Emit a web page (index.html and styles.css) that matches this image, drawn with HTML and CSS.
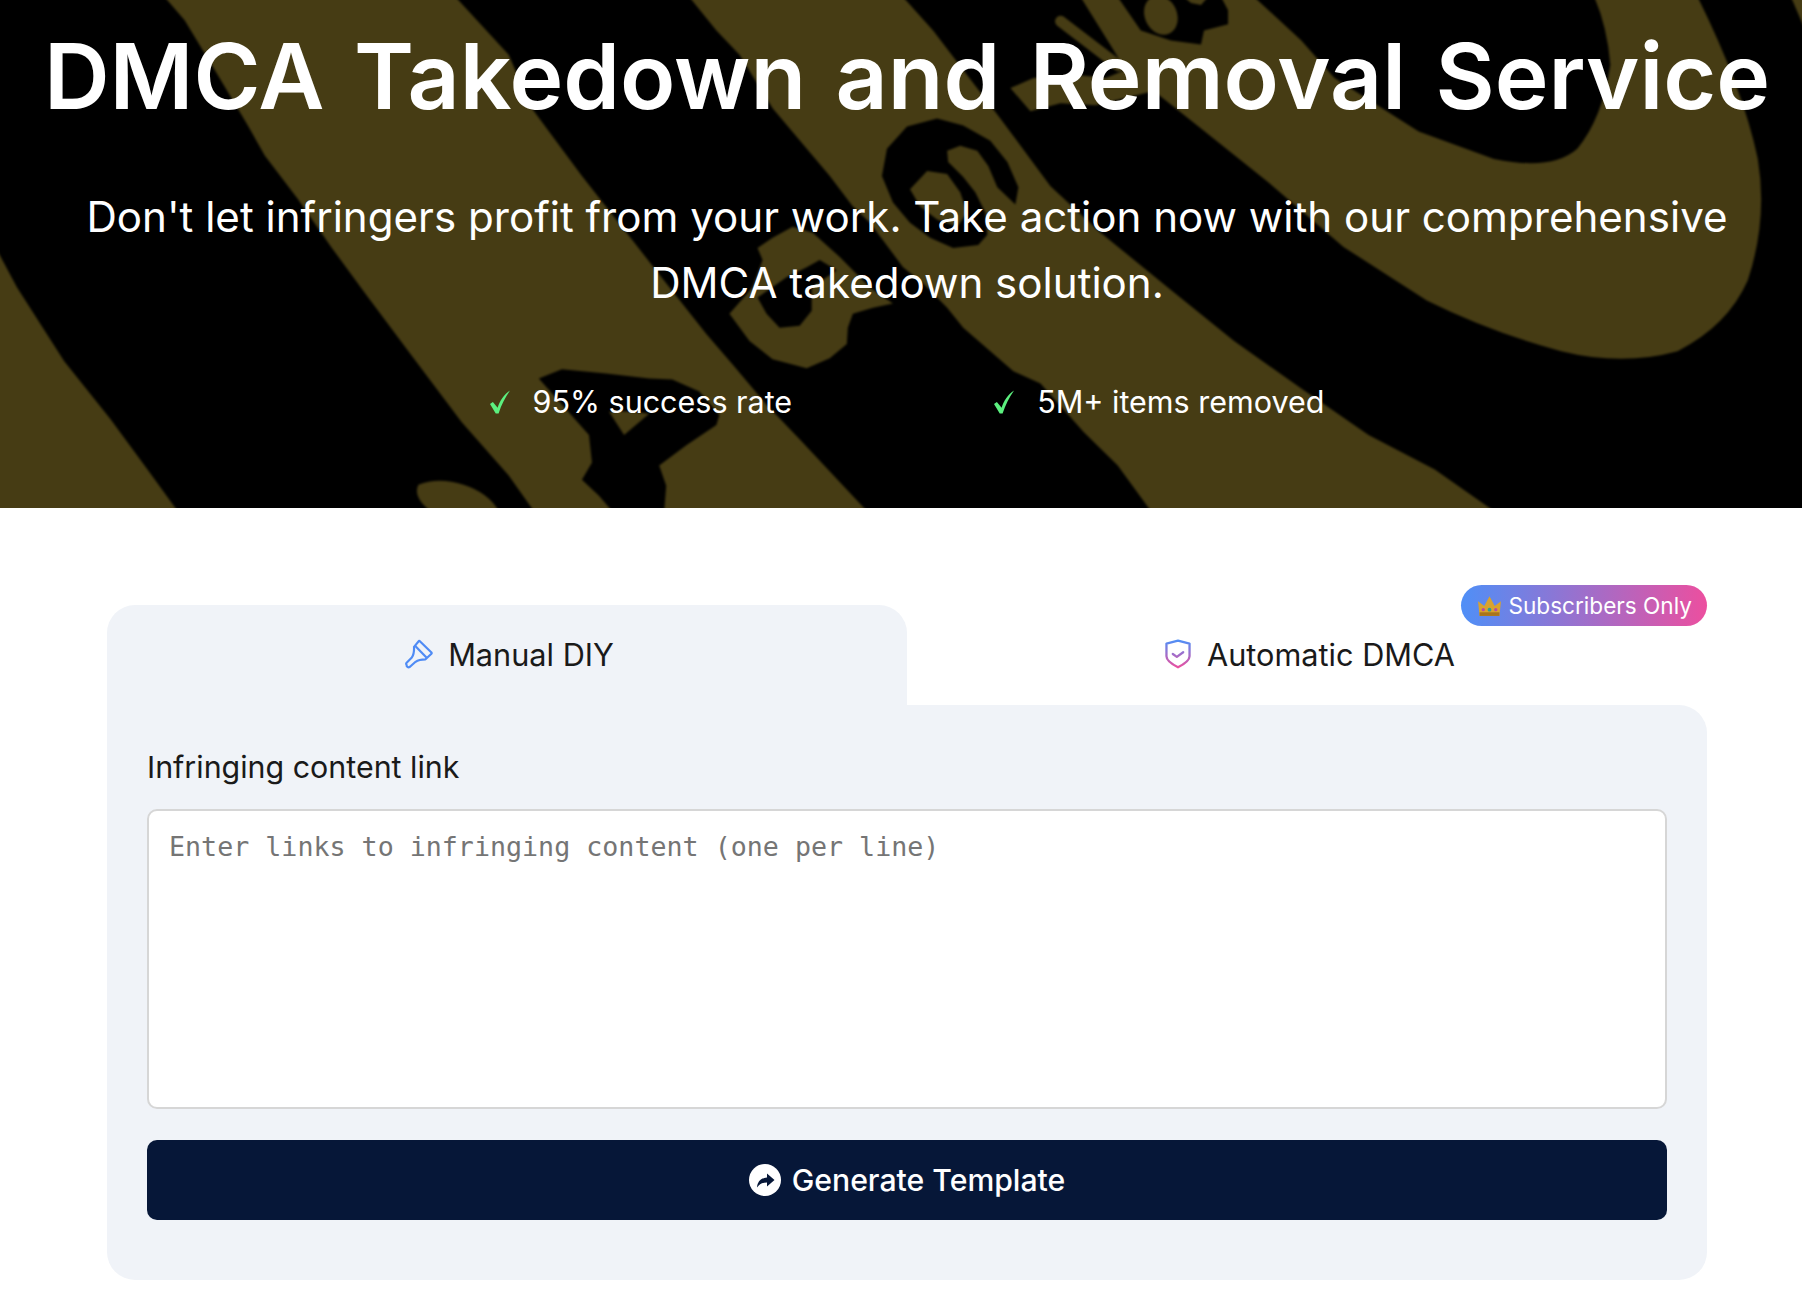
FILE: index.html
```html
<!DOCTYPE html>
<html lang="en">
<head>
    <meta charset="UTF-8">
    <meta name="viewport" content="width=device-width, initial-scale=1.0">
    <title>DMCA Takedown and Removal Service</title>
    <link rel="stylesheet" href="styles.css">
</head>
<body>
    <section class="hero">
        <!-- backdrop artwork -->
        <svg class="hero-art" viewBox="0 0 1802 508" preserveAspectRatio="none" aria-hidden="true">
            <g class="art-olive">
                <path d="M0 250L20 287 67 360 113 417 150 467 180 508H0Z"/>
                <path d="M167 0L187 23 220 77 250 127 267 157 300 200 333 247 367 293 410 350 463 420 510 473 535 508H867L800 437 767 403 733 363 707 333 667 283 633 240 583 177 533 110 510 57 457 0Z"/>
                <path d="M420 482Q440 474 465 482T500 508H432Q414 494 420 482Z"/>
                <path d="M690 0L717 33 740 57 773 110 830 177 853 207 870 223 903 267 923 283 947 307 963 327 1013 370 1040 382 1083 430 1117 463 1150 508H1492L1433 467 1367 433 1300 387 1233 340 1167 287 1100 233 1050 187 1000 120 933 33 903 0Z"/>
                <path d="M758 248L773 238 793 227 813 233 840 257 870 287 893 303 873 307 853 313 848 327 847 343 830 357 807 367 773 358 750 340 730 313 753 287 763 260Z"/>
                <path d="M1253 0L1300 43 1333 80 1417 133 1492 160Q1550 172 1575 150 1600 120 1608 67 1605 30 1592 0H1695Q1740 90 1755 160 1765 220 1745 280 1725 325 1675 350 1620 365 1559 350 1490 332 1425 300L1342 247 1267 183 1200 130 1153 93 1095 107 1060 105 1030 113 1010 90 1033 80 1077 77 1105 80 1125 72 1080 0Z"/>
                <path d="M1788 0H1802V32Z"/>
            </g>
            <path class="art-finger" d="M1060 24L1118 68"/>
            <g class="art-black">
                <path d="M540 377L563 368 607 372 650 377 673 378 700 390 720 413 717 423 687 443 660 463 667 483 665 508H613L600 493 583 477 593 460 590 433Z"/>
                <path d="M820 260L837 270 812 287 812 310 800 325 780 327 767 313 758 297 787 277 807 267Z"/>
                <path d="M937 120L963 127 990 142 1007 163 1018 188 1015 205 997 188 988 167 977 152 960 147 947 152 948 163 963 178 975 193 985 213 987 235 978 245 953 248 930 238 910 223 893 203 882 177 887 150 907 128Z"/>
                <path d="M1117 0L1140 33 1170 43 1200 47 1203 33 1227 27 1227 13 1220 0Z"/>
            </g>
            <g class="art-olive">
                <path d="M610 410Q630 408 650 412L625 433Z"/>
                <path d="M910 190L927 172 947 175 960 193 967 213 957 227 937 220 920 207Z"/>
                <ellipse cx="1160" cy="18" rx="16" ry="20" transform="rotate(-25 1160 18)"/>
                <path d="M1183 0H1207L1200 8 1190 6Z"/>
            </g>
        </svg>
        <h1>DMCA Takedown and Removal Service</h1>
        <p class="subtitle">Don't let infringers profit from your work. Take action now with our comprehensive<br>DMCA takedown solution.</p>
        <ul class="perks">
            <li>
                <svg class="tick" viewBox="0 0 22 24"><path d="M0 14L3 12 8 18C10 11 15 4 21 0 16 7 12 15 9 24H6Z"/></svg>
                95% success rate
            </li>
            <li>
                <svg class="tick" viewBox="0 0 22 24"><path d="M0 14L3 12 8 18C10 11 15 4 21 0 16 7 12 15 9 24H6Z"/></svg>
                5M+ items removed
            </li>
        </ul>
    </section>

    <main class="tool">
        <div class="tabs">
            <div class="tab active">
                <svg class="tab-icon" viewBox="0 0 90 90" fill="none" stroke="#4f8bf5" stroke-width="7" stroke-linejoin="round">
                    <path d="M47 3L85 40Q87 43 84 45L66 62Q45 62 34 70L16 86Q10 90 6 85L5 80Q2 76 6 72L22 56Q30 45 29 22L44 4Q46 2 47 3Z"/>
                    <path d="M33 19L69 56"/>
                </svg>
                Manual DIY
            </div>
            <div class="tab">
                <svg class="tab-icon" viewBox="0 0 24 26" fill="none" stroke="url(#shieldGrad)" stroke-width="2" stroke-linejoin="round" stroke-linecap="round">
                    <defs>
                        <linearGradient id="shieldGrad" gradientUnits="userSpaceOnUse" x1="12" y1="1" x2="12" y2="25">
                            <stop offset="0" stop-color="#4f8ff7"/>
                            <stop offset="1" stop-color="#ec4f9f"/>
                        </linearGradient>
                    </defs>
                    <path d="M2 4L12 1.5 22 4V15C22 19 16 22.5 12 24.5 8 22.5 2 19 2 15Z"/>
                    <path d="M7.5 13L11 15.5 16.5 11.5"/>
                </svg>
                Automatic DMCA
                <span class="badge">
                    <svg class="crown" viewBox="0 0 24 22">
                        <path d="M2.5 21L1 7 7 11.5 12 2 17 11.5 23 7 21.5 21Z" fill="#d9a32e"/>
                        <path d="M2.5 17.5H21.5V21H2.5Z" fill="#a8741c"/>
                        <circle cx="6" cy="15" r="1.6" fill="#b84aa0"/>
                        <circle cx="12" cy="15" r="1.8" fill="#2f9e8f"/>
                        <circle cx="18" cy="15" r="1.6" fill="#b84aa0"/>
                    </svg>
                    Subscribers Only
                </span>
            </div>
        </div>
        <div class="panel">
            <label for="links">Infringing content link</label>
            <textarea id="links" placeholder="Enter links to infringing content (one per line)"></textarea>
            <button type="button">
                <svg class="btn-icon" viewBox="0 0 32 32">
                    <circle cx="16" cy="16" r="16" fill="#fff"/>
                    <path d="M18 9.5L25.5 16 18 22.5V18.5C13.5 18.5 10.5 20 8 23.5 8.5 17.5 12 14 18 13.5Z" fill="#061738"/>
                </svg>
                Generate Template
            </button>
        </div>
    </main>
</body>
</html>
```
FILE: styles.css
```css
* {
    box-sizing: border-box;
}
body {
    margin: 0;
    font-family: Inter, "Liberation Sans", sans-serif;
    color: #1a1a1a;
    background: #fff;
}
.hero {
    position: relative;
    height: 508px;
    padding: 23px 0 0 12px;
    background: #000;
    color: #fff;
    text-align: center;
    overflow: hidden;
}
.hero-art {
    position: absolute;
    left: -3px;
    top: -3px;
    width: calc(100% + 6px);
    height: calc(100% + 6px);
    filter: blur(0.8px);
}
.art-olive {
    fill: #463c14;
}
.art-black {
    fill: #000;
}
.art-finger {
    fill: none;
    stroke: #463c14;
    stroke-width: 11;
    stroke-linecap: round;
}
.hero h1 {
    position: relative;
    margin: 0;
    font-size: 91px;
    font-weight: 600;
    line-height: 106px;
    word-spacing: 6.5px;
}
.subtitle {
    position: relative;
    margin: 55px 0 0;
    font-size: 42.1px;
    line-height: 66px;
}
.perks {
    position: relative;
    display: flex;
    justify-content: center;
    gap: 202px;
    margin: 66px 0 0;
    padding: 0;
    list-style: none;
    font-size: 30.5px;
    line-height: 40px;
}
.perks li {
    display: flex;
    align-items: center;
    gap: 22px;
}
.tick {
    width: 21px;
    height: 24px;
    fill: #5cf07f;
}
.tool {
    padding: 97px 95px 24px 107px;
}
.tabs {
    display: flex;
}
.tab {
    position: relative;
    flex: 1;
    display: flex;
    align-items: center;
    justify-content: center;
    gap: 15px;
    height: 100px;
    padding: 0 0 2px 5px;
    font-size: 30.7px;
    border-radius: 28px 28px 0 0;
}
.tab.active {
    background: #f0f3f8;
}
.tab-icon {
    width: 28px;
    height: 30px;
}
.badge {
    position: absolute;
    top: -20px;
    right: 0;
    display: flex;
    align-items: center;
    gap: 6px;
    height: 41px;
    padding: 0 15px 0 16px;
    border-radius: 21px;
    background: linear-gradient(90deg, #4f8ff7, #ec4f9f);
    color: #fff;
    font-size: 22.6px;
}
.crown {
    width: 25px;
    height: 23px;
}
.panel {
    padding: 40px;
    height: 575px;
    background: #f0f3f8;
    border-radius: 0 28px 28px 28px;
}
.panel label {
    display: block;
    font-size: 30.4px;
    line-height: 44px;
    margin-bottom: 20px;
}
.panel textarea {
    display: block;
    width: 100%;
    height: 300px;
    padding: 20px;
    border: 2px solid #d6d6d6;
    border-radius: 10px;
    background: #fff;
    font-family: "DejaVu Sans Mono", monospace;
    font-size: 26.67px;
    line-height: 32px;
    resize: none;
}
.panel textarea::placeholder {
    color: #757575;
    opacity: 1;
}
.panel button {
    display: flex;
    align-items: center;
    justify-content: center;
    gap: 11px;
    width: 100%;
    height: 80px;
    margin-top: 31px;
    border: 0;
    border-radius: 10px;
    background: #061738;
    color: #fff;
    font-family: inherit;
    font-size: 30.2px;
    font-weight: 500;
}
.btn-icon {
    width: 32px;
    height: 32px;
}
```
